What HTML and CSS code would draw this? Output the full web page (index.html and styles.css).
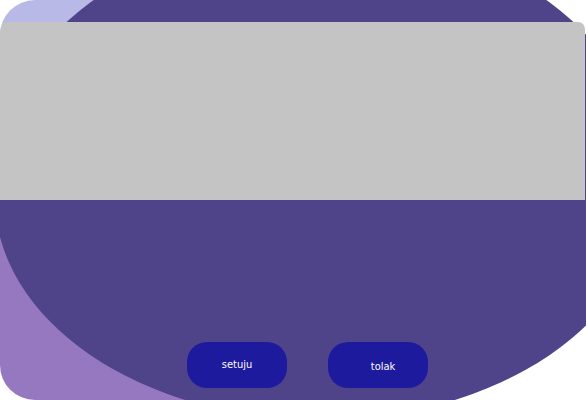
FILE: index.html
```html
<!DOCTYPE html>
<html lang="id">
<head>
<meta charset="utf-8">
<title>Konfirmasi</title>
<link rel="stylesheet" href="styles.css">
</head>
<body>
<main class="screen">
  <div class="blob"></div>
  <div class="banner"></div>
  <div class="actions">
    <button class="btn">setuju</button>
    <button class="btn btn-tolak">tolak</button>
  </div>
</main>
</body>
</html>
```
FILE: styles.css
```css
html, body {
  margin: 0;
  padding: 0;
  background: #ffffff;
}

body {
  width: 586px;
  height: 400px;
  overflow: hidden;
}

.screen {
  position: relative;
  width: 586px;
  height: 400px;
  display: flex;
  flex-direction: column;
  border-radius: 35px 0 0 35px;
  overflow: hidden;
  background: linear-gradient(to bottom, #b9b9e7 0 50%, #9678c1 50%) left top / 300px 100% no-repeat;
}

.blob {
  position: absolute;
  left: -5px;
  top: -68px;
  width: 650px;
  height: 488px;
  background: #4f4489;
  border-radius: 325px / 241px 241px 222px 222px;
}

.banner {
  position: relative;
  margin-top: 22px;
  margin-right: 1px;
  height: 178px;
  background: #c4c4c4;
  border-radius: 7px 7px 0 0;
}

.actions {
  position: relative;
  margin-top: auto;
  display: flex;
  gap: 41px;
  padding: 0 0 12px 187px;
}

.btn {
  width: 100px;
  height: 46px;
  border: none;
  border-radius: 20px;
  background: #1e1a9d;
  color: #ffffff;
  font-family: "DejaVu Sans Condensed", "DejaVu Sans", sans-serif;
  font-size: 11px;
  padding: 0 0 2px 0;
}

.btn-tolak {
  padding: 2px 0 0 10px;
}
```
